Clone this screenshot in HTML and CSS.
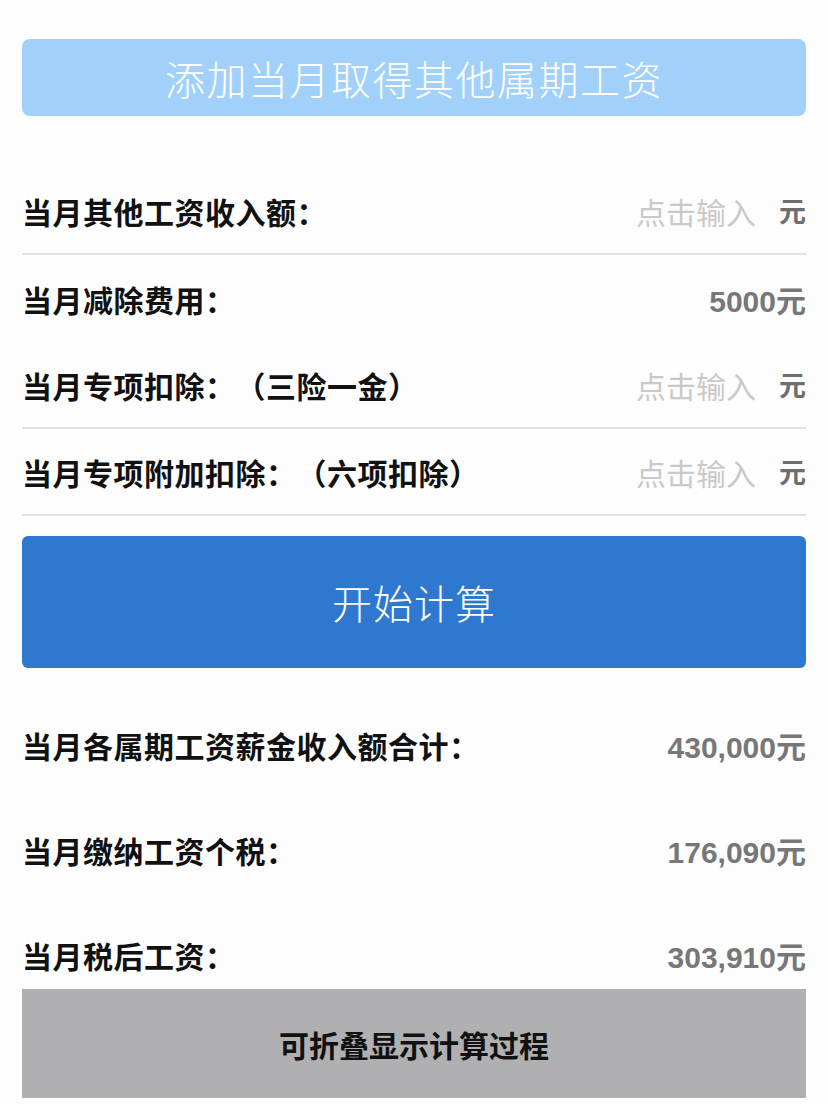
FILE: index.html
```html
<!DOCTYPE html>
<html lang="zh-CN">
<head>
    <meta charset="UTF-8">
    <meta name="viewport" content="width=device-width, initial-scale=1.0">
    <title>工资个税计算</title>
    <link rel="stylesheet" href="styles.css">
</head>
<body>
    <div class="page">
        <button class="add-btn">添加当月取得其他属期工资</button>

        <div class="form">
            <div class="row line">
                <span class="label">当月其他工资收入额：</span>
                <span class="input-wrap"><input class="amount" type="text" placeholder="点击输入"><span class="unit">元</span></span>
            </div>
            <div class="row">
                <span class="label">当月减除费用：</span>
                <span class="value">5000元</span>
            </div>
            <div class="row line">
                <span class="label">当月专项扣除：（三险一金）</span>
                <span class="input-wrap"><input class="amount" type="text" placeholder="点击输入"><span class="unit">元</span></span>
            </div>
            <div class="row line">
                <span class="label">当月专项附加扣除：（六项扣除）</span>
                <span class="input-wrap"><input class="amount" type="text" placeholder="点击输入"><span class="unit">元</span></span>
            </div>
        </div>

        <button class="calc-btn">开始计算</button>

        <div class="results">
            <div class="result">
                <span class="label">当月各属期工资薪金收入额合计：</span>
                <span class="value">430,000元</span>
            </div>
            <div class="result">
                <span class="label">当月缴纳工资个税：</span>
                <span class="value">176,090元</span>
            </div>
            <div class="result">
                <span class="label">当月税后工资：</span>
                <span class="value">303,910元</span>
            </div>
        </div>

        <div class="fold-bar">可折叠显示计算过程</div>
    </div>
</body>
</html>
```

FILE: styles.css
```css
body {
    margin: 0;
    background-color: #fdfdfd;
    font-family: "Noto Sans CJK SC", sans-serif;
    color: #111;
    text-spacing-trim: space-all;
}
.page {
    padding: 39px 22px 0 22px;
}
button {
    display: block;
    width: 100%;
    border: none;
    color: white;
    font-family: "Noto Sans CJK SC", sans-serif;
    font-weight: 300;
    cursor: pointer;
}
.add-btn {
    height: 77px;
    background-color: #a1d1fa;
    border-radius: 8px;
    font-size: 40px;
    letter-spacing: 1.5px;
}
.form {
    margin-top: 52px;
}
.row {
    height: 87px;
    display: flex;
    align-items: center;
    justify-content: space-between;
    box-sizing: border-box;
}
.row.line {
    border-bottom: 2px solid #e2e2e2;
}
.label {
    font-size: 30px;
    font-weight: 700;
    letter-spacing: 0.5px;
}
.input-wrap {
    display: flex;
    align-items: center;
}
.amount {
    width: 122px;
    border: none;
    background: transparent;
    font-family: "Noto Sans CJK SC", sans-serif;
    font-size: 30px;
    text-align: right;
    padding: 0;
    outline: none;
}
.amount::placeholder {
    color: #c9c9c9;
}
.unit {
    margin-left: 23px;
    font-size: 27px;
    font-weight: 700;
    color: #6d6d6d;
}
.value {
    font-family: "Liberation Sans", "Noto Sans CJK SC", sans-serif;
    font-size: 30px;
    font-weight: 700;
    color: #777;
}
.calc-btn {
    margin-top: 20px;
    height: 132px;
    background-color: #2f78cf;
    border-radius: 6px;
    font-size: 40px;
    letter-spacing: 1px;
}
.results {
    margin-top: 57px;
    display: flex;
    flex-direction: column;
    gap: 65px;
}
.result {
    height: 40px;
    display: flex;
    align-items: center;
    justify-content: space-between;
}
.fold-bar {
    margin-top: 14px;
    height: 109px;
    background-color: #b0afb1;
    display: flex;
    align-items: center;
    justify-content: center;
    font-size: 30px;
    font-weight: 700;
    color: #111;
}
```
